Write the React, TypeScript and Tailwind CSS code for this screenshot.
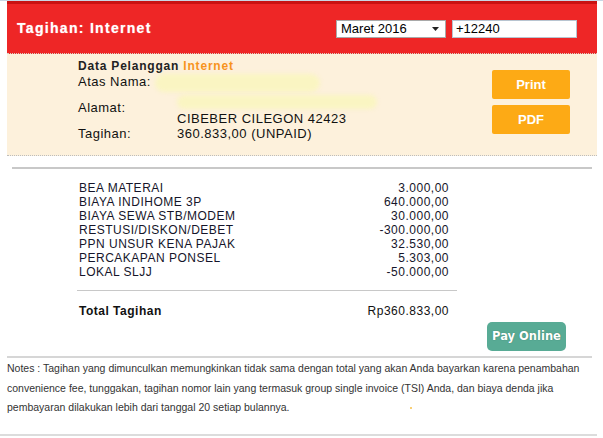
import { useState } from 'react';

interface BillItem {
  label: string;
  amount: string;
}

const items: BillItem[] = [
  { label: 'BEA MATERAI', amount: '3.000,00' },
  { label: 'BIAYA INDIHOME 3P', amount: '640.000,00' },
  { label: 'BIAYA SEWA STB/MODEM', amount: '30.000,00' },
  { label: 'RESTUSI/DISKON/DEBET', amount: '-300.000,00' },
  { label: 'PPN UNSUR KENA PAJAK', amount: '32.530,00' },
  { label: 'PERCAKAPAN PONSEL', amount: '5.303,00' },
  { label: 'LOKAL SLJJ', amount: '-50.000,00' },
];

const notes = [
  'Notes : Tagihan yang dimunculkan memungkinkan tidak sama dengan total yang akan Anda bayarkan karena penambahan',
  'convenience fee, tunggakan, tagihan nomor lain yang termasuk group single invoice (TSI) Anda, dan biaya denda jika',
  'pembayaran dilakukan lebih dari tanggal 20 setiap bulannya.',
];

const App = () => {
  const [month, setMonth] = useState('2016-03');
  const [phone, setPhone] = useState('+12240');

  return (
    <div className="min-h-[438px] bg-white border-t border-[#c9d6e4] font-['Liberation_Sans',Arial,sans-serif] text-[#111]">
      <div className="ml-[7px] w-[590px]">
        {/* Header */}
        <div className="h-[53px] border-t-[3px] border-[#c91212] bg-[#ee2626] border-b border-b-[#d9cfc4] border-dotted flex items-center pl-[10px] pr-[20px]" style={{ borderTopStyle: 'solid' }}>
          <h1 className="text-white text-[14px] font-bold tracking-[1.3px] [text-shadow:0_0_1px_#ffb3b3]">Tagihan: Internet</h1>
          <div className="ml-auto flex items-center gap-[6px]">
            <div className="flex items-center w-[110px] h-[18px] bg-white border border-[#a9a9a9] pl-[4px] pr-[6px]">
              <select
                value={month}
                onChange={(e) => setMonth(e.target.value)}
                className="appearance-none bg-transparent flex-1 text-[13px] leading-[16px] outline-none text-black"
              >
                <option value="2016-03">Maret 2016</option>
                <option value="2016-02">Februari 2016</option>
              </select>
              <svg width="7" height="4" viewBox="0 0 7 4" className="shrink-0">
                <path d="M0 0h7L3.5 4z" fill="#222" />
              </svg>
            </div>
            <input
              value={phone}
              onChange={(e) => setPhone(e.target.value)}
              className="w-[125px] h-[18px] bg-white border border-[#b8c4d0] px-[3px] text-[13px] text-black outline-none"
            />
          </div>
        </div>

        {/* Data pelanggan */}
        <div className="h-[102px] bg-[#fdf1dc] border-b border-dotted border-[#bdbdbd] flex">
          <div className="ml-[71px] pt-[5px] text-[13px] tracking-[0.5px]">
            <div className="h-[14px] leading-[14px] text-[12px] font-bold tracking-[0.8px] text-[#222]">
              Data Pelanggan <span className="text-[#f7941d]">Internet</span>
            </div>
            <div className="grid grid-cols-[99px_auto] mt-[2px]">
              <div className="h-[14px] leading-[14px]">Atas Nama:</div>
              <div className="h-[14px] flex items-center">
                <span className="block w-[165px] h-[18px] -ml-[22px] mt-[2px] rounded-full bg-[#faf5c2] blur-[2px]" />
              </div>
              <div className="self-center leading-[14px]">Alamat:</div>
              <div className="pt-[3px]">
                <div className="h-[20px] flex items-center">
                  <span className="block w-[200px] h-[14px] rounded-full bg-[#faf5c2] blur-[2px]" />
                </div>
                <div className="h-[14px] leading-[14px]">CIBEBER CILEGON 42423</div>
              </div>
              <div className="h-[14px] leading-[14px] mt-[1px]">Tagihan:</div>
              <div className="h-[14px] leading-[14px] mt-[1px]">360.833,00 (UNPAID)</div>
            </div>
          </div>
          <div className="ml-auto mr-[27px] pt-[16px] flex flex-col gap-[6px]">
            <button className="w-[78px] h-[29px] rounded-[2px] bg-[#fdaa15] text-white text-[13px] font-bold">Print</button>
            <button className="w-[78px] h-[29px] rounded-[2px] bg-[#fdaa15] text-white text-[13px] font-bold">PDF</button>
          </div>
        </div>

        {/* Rincian */}
        <div className="mt-[11px] ml-[5px] w-[580px] h-[2px] bg-[#c8c8c8]" />
        <div className="ml-[72px] w-[370px] mt-[12px] text-[12px] tracking-[0.5px] text-[#15152a]">
          {items.map((item) => (
            <div key={item.label} className="flex justify-between h-[14px] leading-[14px]">
              <span>{item.label}</span>
              <span>{item.amount}</span>
            </div>
          ))}
        </div>
        <div className="ml-[70px] w-[380px] mt-[11px] h-px bg-[#c8c8c8]" />
        <div className="ml-[72px] w-[370px] mt-[13px] flex justify-between text-[12px] tracking-[0.5px] h-[14px] leading-[14px]">
          <span className="font-bold">Total Tagihan</span>
          <span>Rp360.833,00</span>
        </div>
        <div className="flex mt-[4px] pr-[31px]">
          <button className="ml-auto w-[79px] h-[29px] rounded-[5px] bg-[#58ab95] text-white text-[11.5px] font-bold font-['DejaVu_Sans',sans-serif] [text-shadow:0_0_1px_#2f6e5e]">
            Pay Online
          </button>
        </div>
        <div className="mt-[5px] w-[585px] h-[2px] bg-[#d6d6d6]" />

        {/* Notes */}
        <div className="pt-[1px] text-[10.5px] leading-[19.5px] text-[#333] whitespace-nowrap">
          {notes.map((line, i) => (
            <div key={i} className="flex items-center">
              <span>{line}</span>
              {i === 2 && <span className="ml-[120px] w-[2px] h-[2px] rounded-full bg-[#f7c04a]" />}
            </div>
          ))}
        </div>
        <div className="mt-[16px] -ml-[7px] w-[597px] h-[2px] bg-[#dcdcdc]" />
      </div>
    </div>
  );
};

export default App;
